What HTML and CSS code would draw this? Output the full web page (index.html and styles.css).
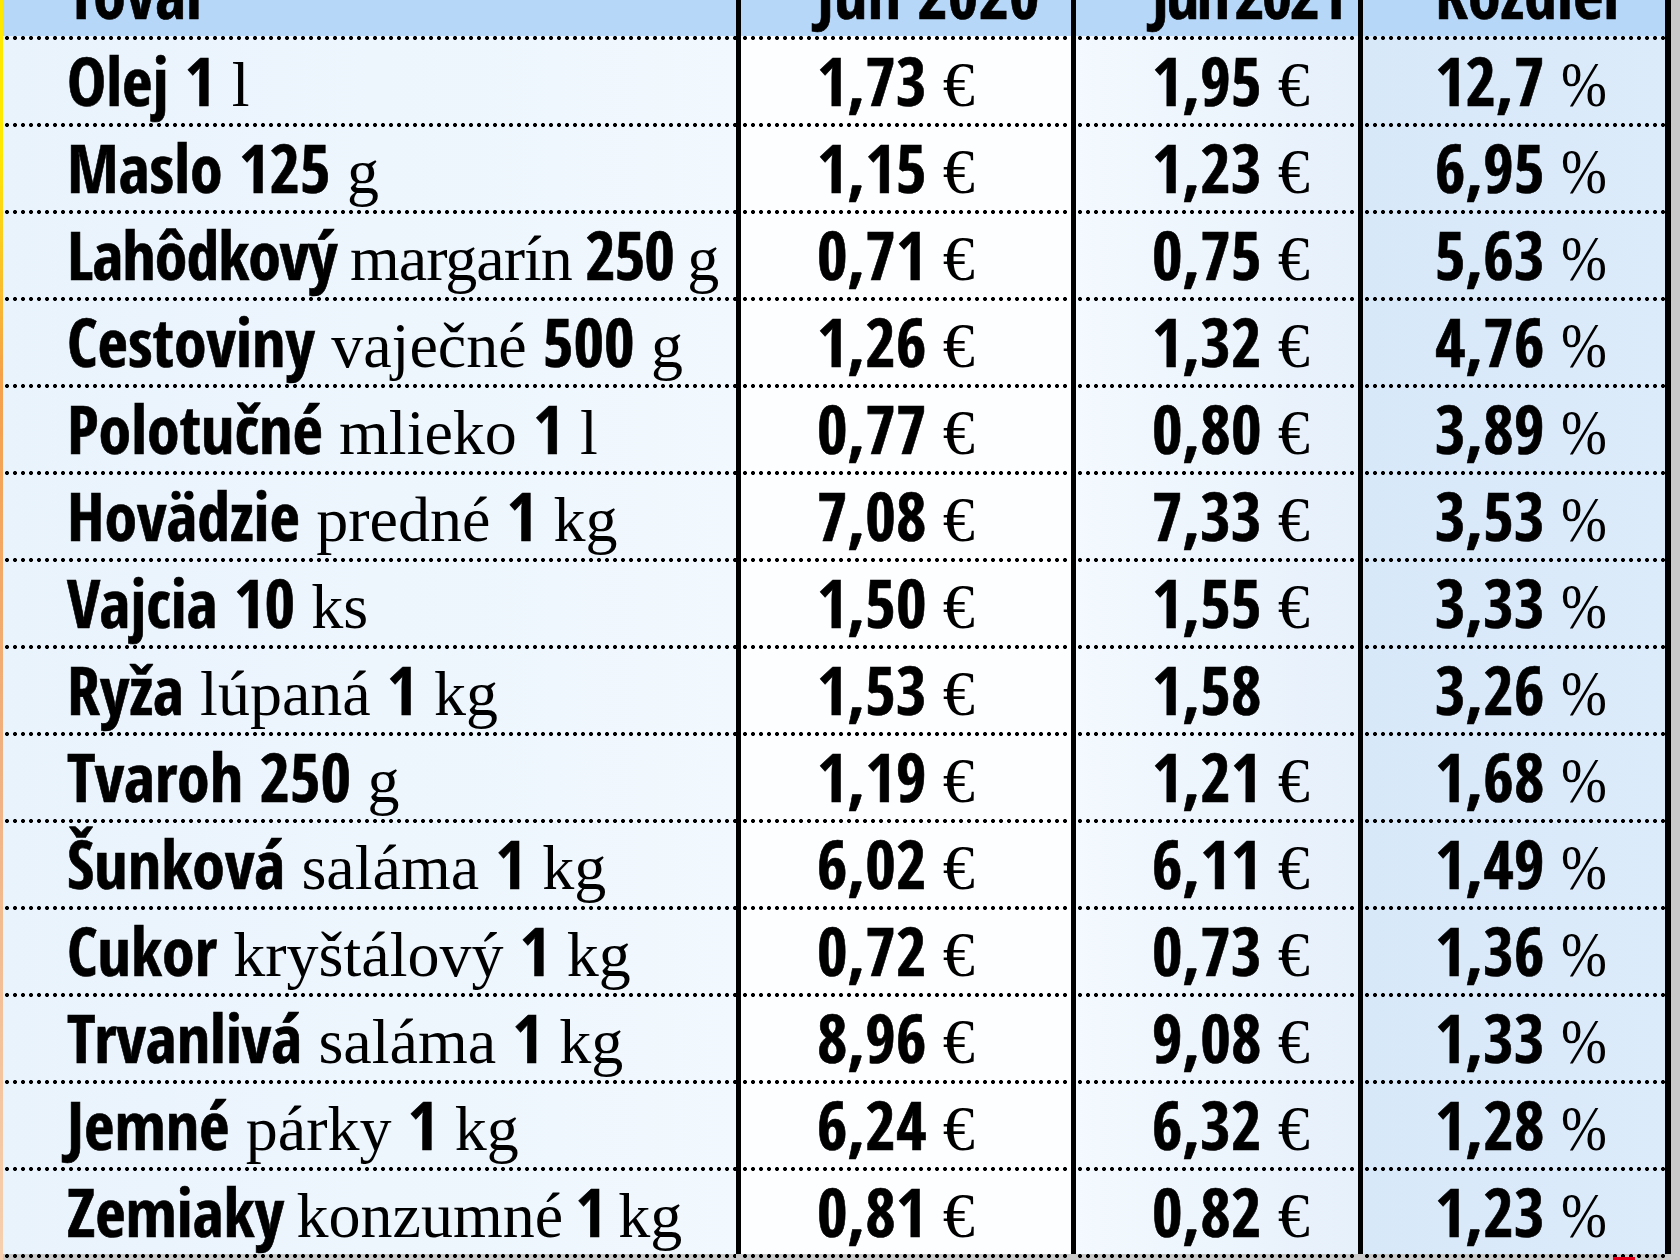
FILE: index.html
```html
<!DOCTYPE html>
<html lang="sk">
<head>
<meta charset="utf-8">
<title>Ceny potravín</title>
<link rel="stylesheet" href="styles.css">
</head>
<body>
<div class="page">
  <div class="table">
    <div class="row head">
      <div class="cell c1"><span class="hd">Tovar</span></div>
      <div class="cell c2"><span class="hd">Jún 2020</span></div>
      <div class="cell c3"><span class="hd tight">Jún 2021</span></div>
      <div class="cell c4"><span class="hd">Rozdiel</span></div>
    </div>

    <div class="row">
      <div class="cell c1"><b>Olej 1</b> <i>l</i></div>
      <div class="cell c2"><b>1,73</b> <i>€</i></div>
      <div class="cell c3"><b>1,95</b> <i>€</i></div>
      <div class="cell c4"><b>12,7</b> <i class="pct">%</i></div>
    </div>
    <div class="row">
      <div class="cell c1"><b>Maslo 125</b> <i>g</i></div>
      <div class="cell c2"><b>1,15</b> <i>€</i></div>
      <div class="cell c3"><b>1,23</b> <i>€</i></div>
      <div class="cell c4"><b>6,95</b> <i class="pct">%</i></div>
    </div>
    <div class="row">
      <div class="cell c1 squeeze"><b>Lahôdkový</b> <i>margarín</i> <b>250</b> <i>g</i></div>
      <div class="cell c2"><b>0,71</b> <i>€</i></div>
      <div class="cell c3"><b>0,75</b> <i>€</i></div>
      <div class="cell c4"><b>5,63</b> <i class="pct">%</i></div>
    </div>
    <div class="row">
      <div class="cell c1"><b>Cestoviny</b> <i>vaječné</i> <b>500</b> <i>g</i></div>
      <div class="cell c2"><b>1,26</b> <i>€</i></div>
      <div class="cell c3"><b>1,32</b> <i>€</i></div>
      <div class="cell c4"><b>4,76</b> <i class="pct">%</i></div>
    </div>
    <div class="row">
      <div class="cell c1"><b>Polotučné</b> <i>mlieko</i> <b>1</b> <i>l</i></div>
      <div class="cell c2"><b>0,77</b> <i>€</i></div>
      <div class="cell c3"><b>0,80</b> <i>€</i></div>
      <div class="cell c4"><b>3,89</b> <i class="pct">%</i></div>
    </div>
    <div class="row">
      <div class="cell c1"><b>Hovädzie</b> <i>predné</i> <b>1</b> <i>kg</i></div>
      <div class="cell c2"><b>7,08</b> <i>€</i></div>
      <div class="cell c3"><b>7,33</b> <i>€</i></div>
      <div class="cell c4"><b>3,53</b> <i class="pct">%</i></div>
    </div>
    <div class="row">
      <div class="cell c1"><b>Vajcia 10</b> <i>ks</i></div>
      <div class="cell c2"><b>1,50</b> <i>€</i></div>
      <div class="cell c3"><b>1,55</b> <i>€</i></div>
      <div class="cell c4"><b>3,33</b> <i class="pct">%</i></div>
    </div>
    <div class="row">
      <div class="cell c1"><b>Ryža</b> <i>lúpaná</i> <b>1</b> <i>kg</i></div>
      <div class="cell c2"><b>1,53</b> <i>€</i></div>
      <div class="cell c3"><b>1,58</b></div>
      <div class="cell c4"><b>3,26</b> <i class="pct">%</i></div>
    </div>
    <div class="row">
      <div class="cell c1"><b>Tvaroh 250</b> <i>g</i></div>
      <div class="cell c2"><b>1,19</b> <i>€</i></div>
      <div class="cell c3"><b>1,21</b> <i>€</i></div>
      <div class="cell c4"><b>1,68</b> <i class="pct">%</i></div>
    </div>
    <div class="row">
      <div class="cell c1"><b>Šunková</b> <i>saláma</i> <b>1</b> <i>kg</i></div>
      <div class="cell c2"><b>6,02</b> <i>€</i></div>
      <div class="cell c3"><b>6,11</b> <i>€</i></div>
      <div class="cell c4"><b>1,49</b> <i class="pct">%</i></div>
    </div>
    <div class="row">
      <div class="cell c1"><b>Cukor</b> <i>kryštálový</i> <b>1</b> <i>kg</i></div>
      <div class="cell c2"><b>0,72</b> <i>€</i></div>
      <div class="cell c3"><b>0,73</b> <i>€</i></div>
      <div class="cell c4"><b>1,36</b> <i class="pct">%</i></div>
    </div>
    <div class="row">
      <div class="cell c1"><b>Trvanlivá</b> <i>saláma</i> <b>1</b> <i>kg</i></div>
      <div class="cell c2"><b>8,96</b> <i>€</i></div>
      <div class="cell c3"><b>9,08</b> <i>€</i></div>
      <div class="cell c4"><b>1,33</b> <i class="pct">%</i></div>
    </div>
    <div class="row">
      <div class="cell c1"><b>Jemné</b> <i>párky</i> <b>1</b> <i>kg</i></div>
      <div class="cell c2"><b>6,24</b> <i>€</i></div>
      <div class="cell c3"><b>6,32</b> <i>€</i></div>
      <div class="cell c4"><b>1,28</b> <i class="pct">%</i></div>
    </div>
    <div class="row">
      <div class="cell c1 squeeze-s"><b>Zemiaky</b> <i>konzumné</i> <b>1</b> <i>kg</i></div>
      <div class="cell c2"><b>0,81</b> <i>€</i></div>
      <div class="cell c3"><b>0,82</b> <i>€</i></div>
      <div class="cell c4"><b>1,23</b> <i class="pct">%</i></div>
    </div>
    <div class="row foot">
      <div class="cell c1"></div>
      <div class="cell c2"></div>
      <div class="cell c3"></div>
      <div class="cell c4"><span class="mark"></span></div>
    </div>
  </div>
</div>
</body>
</html>
```

FILE: styles.css
```css
html, body {
  margin: 0;
  padding: 0;
  background: #c9c9c9;
  overflow: hidden;
}

.page {
  width: 1680px;
  height: 1260px;
  background: #c9c9c9;
  overflow: hidden;
}

.table {
  width: 1677px;
  border-left: 3px solid #f2a23a;
  border-image: linear-gradient(to bottom, #ffe800 0%, #ffe800 12%, #f5a04a 30%, #f0b080 60%, #f6d0b0 100%) 1;
  border-right: none;
  border-top: none;
  border-bottom: none;
  box-sizing: border-box;
}

.row {
  display: grid;
  grid-template-columns: 733px 335px 287px 313px;
  height: 87px;
  font-family: "Open Sans Condensed", "Roboto Condensed", "Liberation Sans", sans-serif;
  font-size: 66px;
  color: #000;
}

.cell {
  box-sizing: border-box;
  padding: 4px 0 0 75px;
  line-height: 81px;
  white-space: nowrap;
  background-image: radial-gradient(circle at 4px 2px, #000 0, #000 1.7px, transparent 2.3px);
  background-size: 8px 4px;
  background-repeat: repeat-x;
  background-position: 0 0;
}

.c1 {
  padding-left: 64px;
  background-color: #edf5fd;
  background-image: radial-gradient(circle at 4px 2px, #000 0, #000 1.7px, transparent 2.3px), linear-gradient(to right, #e9f3fc, #f1f8fe);
  background-size: 8px 4px, 100% 100%;
  background-repeat: repeat-x, no-repeat;
}

.c2 {
  padding-left: 76px;
  border-left: 5px solid #000;
  background-color: #fdfeff;
}

.c3 {
  padding-left: 76px;
  border-left: 5px solid #000;
  background-color: #eef5fd;
  background-image: radial-gradient(circle at 4px 2px, #000 0, #000 1.7px, transparent 2.3px), linear-gradient(to right, #f3f9fe, #e6f0fb);
  background-size: 8px 4px, 100% 100%;
  background-repeat: repeat-x, no-repeat;
}

.c4 {
  padding-left: 72px;
  border-left: 5px solid #000;
  border-right: 6px solid #000;
  background-color: #d9e9f9;
  background-image: radial-gradient(circle at 4px 2px, #000 0, #000 1.7px, transparent 2.3px), linear-gradient(to right, #d7e8f9, #dcebfa);
  background-size: 8px 4px, 100% 100%;
  background-repeat: repeat-x, no-repeat;
}

b {
  font-weight: 700;
  -webkit-text-stroke: 0.6px #000;
}

i {
  font-style: normal;
  font-family: "Liberation Serif", "DejaVu Serif", serif;
  font-weight: 400;
  font-size: 64px;
}

.pct {
  display: inline-block;
  transform: scaleX(0.86);
  transform-origin: 0 50%;
}

.squeeze {
  letter-spacing: -1px;
  word-spacing: -2px;
}

.squeeze-s {
  word-spacing: -4px;
}

/* header */
.head {
  height: 36px;
}

.head .cell {
  background-image: none;
  background-color: #b7d7f8;
  padding-top: 0;
  line-height: 66px;
}

.hd {
  display: block;
  font-weight: 700;
  -webkit-text-stroke: 0.6px #000;
  margin-top: -40px;
}

.tight {
  letter-spacing: -3px;
  word-spacing: -6px;
}

/* footer line */
.foot {
  height: 6px;
}

.foot .cell {
  padding: 0;
  background-color: #c9c9c9;
  background-image: radial-gradient(circle at 4px 2px, #000 0, #000 1.7px, transparent 2.3px);
  background-size: 8px 4px;
  background-repeat: repeat-x;
  border-color: #c9c9c9;
  position: relative;
}

.foot .c4 {
  border-right-color: #c9c9c9;
}

.mark {
  position: absolute;
  right: 30px;
  top: 3px;
  width: 22px;
  height: 8px;
  background: #e3001b;
}
```
